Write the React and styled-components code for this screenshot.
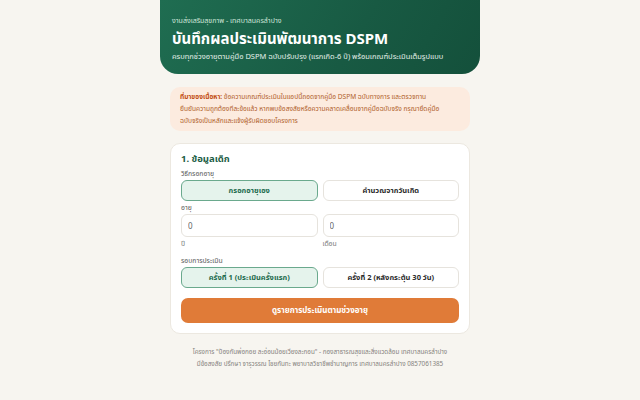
import React, { useState } from 'react'
import styled, { createGlobalStyle } from 'styled-components'

const GlobalStyle = createGlobalStyle`
  * { box-sizing: border-box; }
  html, body {
    margin: 0;
    padding: 0;
    background: #f7f5f0;
    font-family: "Noto Sans", "Noto Sans Thai", sans-serif;
    color: #2b2b2b;
  }
`

const Page = styled.div`
  width: 320px;
  margin: 0 auto;
  display: flex;
  flex-direction: column;
`

const Header = styled.header`
  background: linear-gradient(120deg, #1f6d51 0%, #185a43 60%, #14503b 100%);
  border-radius: 0 0 18px 18px;
  padding: 16px 12px 12px 12px;
  color: #fff;
  display: flex;
  flex-direction: column;
  gap: 2px;
`

const Kicker = styled.div`
  font-size: 7px;
  color: #cfe6da;
  line-height: 10px;
`

const Title = styled.h1`
  margin: 0;
  font-size: 15px;
  font-weight: 700;
  line-height: 20px;
`

const Subtitle = styled.div`
  font-size: 7.5px;
  color: #e4f1ea;
  line-height: 12px;
`

const Body = styled.main`
  padding: 13px 10px 0 10px;
  display: flex;
  flex-direction: column;
  gap: 12px;
`

const Notice = styled.div`
  background: #fcebdf;
  border-radius: 10px;
  padding: 4px 10px 4px 10px;
  font-size: 6.6px;
  line-height: 12px;
  color: #b0602a;
`

const NoticeLine = styled.div`
  white-space: nowrap;
`

const NoticeLead = styled.b`
  color: #c24d12;
  font-weight: 700;
`

const Card = styled.section`
  background: #fff;
  border: 1px solid #ece8e0;
  border-radius: 10px;
  padding: 8px 10px 10px 10px;
  display: flex;
  flex-direction: column;
`

const CardTitle = styled.h2`
  margin: 0 0 3px 0;
  font-size: 9.5px;
  font-weight: 700;
  color: #1d5e46;
  line-height: 14px;
`

const Label = styled.div`
  font-size: 6.8px;
  color: #555;
  line-height: 9px;
  margin-bottom: 2px;
`

const Hint = styled.div`
  font-size: 6.8px;
  color: #777;
  line-height: 9px;
  margin-top: 2px;
`

const Row = styled.div`
  display: grid;
  grid-template-columns: 1fr 1fr;
  gap: 5px;
  margin-bottom: ${p => p.$mb || 0}px;
`

const Choice = styled.button`
  height: 21px;
  border-radius: 6px;
  font-family: inherit;
  font-size: 7.5px;
  font-weight: 700;
  cursor: pointer;
  border: 1px solid ${p => (p.$active ? '#6aa98d' : '#e6e3dd')};
  background: ${p => (p.$active ? '#e5f3ec' : '#fff')};
  color: ${p => (p.$active ? '#1d6b4d' : '#2b2b2b')};
`

const Field = styled.div`
  display: flex;
  flex-direction: column;
`

const Input = styled.input`
  height: 23px;
  border: 1px solid #e6e3dd;
  border-radius: 6px;
  padding: 0 6px;
  font-family: inherit;
  font-size: 8px;
  color: #666;
  outline: none;
  width: 100%;
`

const Primary = styled.button`
  margin-top: 10px;
  height: 25px;
  border: none;
  border-radius: 7px;
  background: #e07b38;
  color: #fff;
  font-family: inherit;
  font-size: 8px;
  font-weight: 700;
  cursor: pointer;
`

const Footer = styled.footer`
  padding: 12px 10px 0 10px;
  text-align: center;
  font-size: 6.3px;
  line-height: 12px;
  color: #85827d;
`

export default function App() {
  const [mode, setMode] = useState('manual')
  const [round, setRound] = useState(1)

  return (
    <>
      <GlobalStyle />
      <Page>
        <Header>
          <Kicker>งานส่งเสริมสุขภาพ - เทศบาลนครลำปาง</Kicker>
          <Title>บันทึกผลประเมินพัฒนาการ DSPM</Title>
          <Subtitle>ครบทุกช่วงอายุตามคู่มือ DSPM ฉบับปรับปรุง (แรกเกิด-6 ปี) พร้อมเกณฑ์ประเมินเต็มรูปแบบ</Subtitle>
        </Header>

        <Body>
          <Notice>
            <NoticeLine>
              <NoticeLead>ที่มาของเนื้อหา:</NoticeLead> ข้อความเกณฑ์ประเมินในแอปนี้ถอดจากคู่มือ DSPM ฉบับทางการ และตรวจทาน
            </NoticeLine>
            <NoticeLine>ยืนยันความถูกต้องทีละข้อแล้ว หากพบข้อสงสัยหรือความคลาดเคลื่อนจากคู่มือฉบับจริง กรุณายึดคู่มือ</NoticeLine>
            <NoticeLine>ฉบับจริงเป็นหลักและแจ้งผู้รับผิดชอบโครงการ</NoticeLine>
          </Notice>

          <Card>
            <CardTitle>1. ข้อมูลเด็ก</CardTitle>

            <Label>วิธีกรอกอายุ</Label>
            <Row $mb={2}>
              <Choice $active={mode === 'manual'} onClick={() => setMode('manual')}>กรอกอายุเอง</Choice>
              <Choice $active={mode === 'dob'} onClick={() => setMode('dob')}>คำนวณจากวันเกิด</Choice>
            </Row>

            <Label>อายุ</Label>
            <Row $mb={8}>
              <Field>
                <Input defaultValue="0" />
                <Hint>ปี</Hint>
              </Field>
              <Field>
                <Input defaultValue="0" />
                <Hint>เดือน</Hint>
              </Field>
            </Row>

            <Label>รอบการประเมิน</Label>
            <Row>
              <Choice $active={round === 1} onClick={() => setRound(1)}>ครั้งที่ 1 (ประเมินครั้งแรก)</Choice>
              <Choice $active={round === 2} onClick={() => setRound(2)}>ครั้งที่ 2 (หลังกระตุ้น 30 วัน)</Choice>
            </Row>

            <Primary>ดูรายการประเมินตามช่วงอายุ</Primary>
          </Card>
        </Body>

        <Footer>
          โครงการ "ป้องกันพ่อกอย ละอ่อนน้อยเวียงละกอน" - กองสาธารณสุขและสิ่งแวดล้อม เทศบาลนครลำปาง
          <br />
          มีข้อสงสัย ปรึกษา จารุวรรณ ไชยกันทะ พยาบาลวิชาชีพชำนาญการ เทศบาลนครลำปาง 0857061385
        </Footer>
      </Page>
    </>
  )
}
